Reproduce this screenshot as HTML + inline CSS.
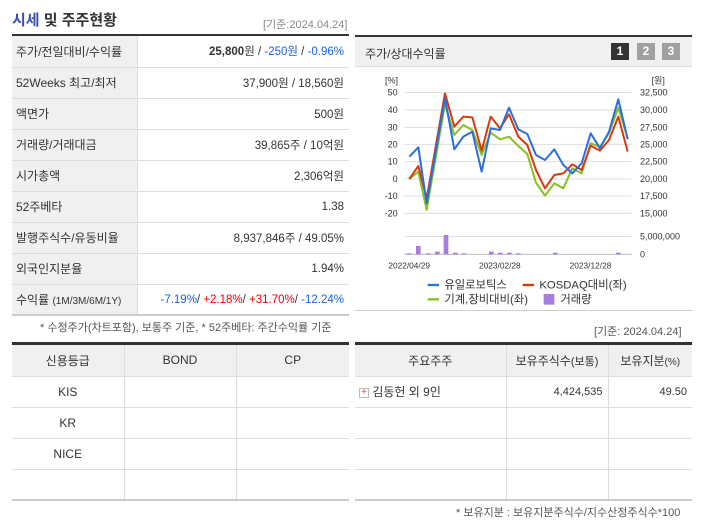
<!DOCTYPE html>
<html><head><meta charset="utf-8"><style>
*{margin:0;padding:0;box-sizing:border-box}
body{width:702px;height:525px;background:#fff;font-family:"Liberation Sans","Noto Sans CJK KR",sans-serif;font-size:12px;color:#333;position:relative;overflow:hidden}
.abs{position:absolute}
table{border-collapse:collapse;position:absolute}
td{border-bottom:1px solid #ddd;height:31px;font-size:12px}
.l td.h{background:#f0f0f0;border-right:1px solid #ddd;padding-left:4px;color:#333}
.l td.v{text-align:right;padding-right:5px;color:#333;font-size:11.5px}
.b td,.b th{border:1px solid #ddd;border-top:none;height:31px;text-align:center;font-weight:normal;font-size:12px}
.b th{background:#f0f0f0;height:31px}
.b tr td:first-child,.b tr th:first-child{border-left:none}
.b tr td:last-child,.b tr th:last-child{border-right:none}
.blue{color:#1a5fe0}.red{color:#e00}
</style></head><body>
<div class="abs" style="left:12px;top:9px;font-size:15px;font-weight:bold;color:#333"><span style="color:#3a4fb0">시세</span> 및 주주현황</div>
<div class="abs" style="left:263px;top:16px;font-size:11px;color:#888">[기준:2024.04.24]</div>
<div class="abs" style="left:12px;top:34px;width:337px;height:2px;background:#333"></div>
<table class="l" style="left:12px;top:36px;width:337px">
<tr><td class="h" style="width:125px">주가/전일대비/수익률</td><td class="v"><b>25,800</b>원 / <span class="blue">-250원</span> / <span class="blue">-0.96%</span></td></tr>
<tr><td class="h">52Weeks 최고/최저</td><td class="v">37,900원 / 18,560원</td></tr>
<tr><td class="h">액면가</td><td class="v">500원</td></tr>
<tr><td class="h">거래량/거래대금</td><td class="v">39,865주 / 10억원</td></tr>
<tr><td class="h">시가총액</td><td class="v">2,306억원</td></tr>
<tr><td class="h">52주베타</td><td class="v">1.38</td></tr>
<tr><td class="h">발행주식수/유동비율</td><td class="v">8,937,846주 / 49.05%</td></tr>
<tr><td class="h">외국인지분율</td><td class="v">1.94%</td></tr>
<tr><td class="h" style="border-bottom:none">수익률 <span style="font-size:10px">(1M/3M/6M/1Y)</span></td><td class="v" style="border-bottom:none"><span class="blue">-7.19%</span>/ <span class="red">+2.18%</span>/ <span class="red">+31.70%</span>/ <span class="blue">-12.24%</span></td></tr>
</table>
<div class="abs" style="left:12px;top:314px;width:337px;height:2px;background:#ccc"></div>
<div class="abs" style="left:40px;top:319px;font-size:11px;color:#555">* 수정주가(차트포함), 보통주 기준, * 52주베타: 주간수익률 기준</div>

<div class="abs" style="left:355px;top:35px;width:337px;height:2px;background:#333"></div>
<div class="abs" style="left:355px;top:37px;width:337px;height:30px;background:#f0f0f0;border-bottom:1px solid #ddd"></div>
<div class="abs" style="left:365px;top:45px;font-size:12px">주가/상대수익률</div>
<div class="abs" style="left:611px;top:43px;width:18px;height:17px;background:#333;color:#fff;font-weight:bold;text-align:center;line-height:17px">1</div>
<div class="abs" style="left:637px;top:43px;width:18px;height:17px;background:#a0a0a0;color:#fff;font-weight:bold;text-align:center;line-height:17px">2</div>
<div class="abs" style="left:662px;top:43px;width:18px;height:17px;background:#a0a0a0;color:#fff;font-weight:bold;text-align:center;line-height:17px">3</div>
<svg class="abs" style="left:0;top:0" width="702" height="525">
<g transform="translate(355,30) scale(0.33333)" font-family="Liberation Sans, Noto Sans CJK KR" font-size="27" fill="#333">
<g stroke="#ddd" stroke-width="3">
<line x1="148" y1="188" x2="830" y2="188"/><line x1="148" y1="240" x2="830" y2="240"/><line x1="148" y1="292" x2="830" y2="292"/><line x1="148" y1="343" x2="830" y2="343"/><line x1="148" y1="395" x2="830" y2="395"/><line x1="148" y1="447" x2="830" y2="447"/><line x1="148" y1="498" x2="830" y2="498"/><line x1="148" y1="550" x2="830" y2="550"/><line x1="148" y1="620" x2="830" y2="620"/><line x1="148" y1="673" x2="830" y2="673" stroke="#bbb"/>
</g>
<text x="90" y="160">[%]</text><text x="890" y="160">[원]</text>
<g text-anchor="end"><text x="128" y="197">50</text><text x="128" y="249">40</text><text x="128" y="301">30</text><text x="128" y="352">20</text><text x="128" y="404">10</text><text x="128" y="456">0</text><text x="128" y="507">-10</text><text x="128" y="559">-20</text></g>
<g><text x="855" y="197">32,500</text><text x="855" y="249">30,000</text><text x="855" y="301">27,500</text><text x="855" y="352">25,000</text><text x="855" y="404">22,500</text><text x="855" y="456">20,000</text><text x="855" y="507">17,500</text><text x="855" y="559">15,000</text><text x="855" y="629">5,000,000</text><text x="855" y="682">0</text></g>
<g fill="#a77ee0"><rect x="155" y="670" width="14" height="3"/><rect x="183" y="648" width="14" height="25"/><rect x="213" y="670" width="14" height="3"/><rect x="240" y="665" width="14" height="8"/><rect x="266" y="615" width="14" height="58"/><rect x="294" y="668" width="14" height="5"/><rect x="320" y="670" width="14" height="3"/><rect x="402" y="665" width="14" height="8"/><rect x="429" y="668" width="14" height="5"/><rect x="456" y="668" width="14" height="5"/><rect x="483" y="670" width="14" height="3"/><rect x="594" y="668" width="14" height="5"/><rect x="783" y="668" width="14" height="5"/></g>
<text x="100" y="716" font-size="25">2022/04/29</text><text x="372" y="716" font-size="25">2023/02/28</text><text x="644" y="716" font-size="25">2023/12/28</text>
<g fill="none" stroke-width="6" stroke-linejoin="round">
<polyline stroke="#88c020" points="163,447 190,425 215,540 270,222 298,315 325,285 352,300 380,375 407,308 435,328 462,320 490,348 517,372 543,458 570,497 598,460 625,475 652,415 680,430 707,340 735,350 762,310 790,233 818,325"/>
<polyline stroke="#d83a10" points="163,447 190,408 215,505 270,190 298,290 325,260 352,262 380,362 407,260 435,295 462,253 490,320 517,345 543,420 570,475 598,435 625,430 652,403 680,420 707,347 735,362 762,330 790,260 818,365"/>
<polyline stroke="#2a6ee0" points="163,380 190,352 215,520 270,205 298,358 325,320 352,305 380,425 407,295 435,300 462,233 490,298 517,312 543,375 570,390 598,358 625,405 652,430 680,400 707,310 735,355 762,305 790,208 818,328"/>
</g>
<g font-size="34">
<line x1="218" y1="765" x2="252" y2="765" stroke="#2a6ee0" stroke-width="7"/><text x="268" y="776">유일로보틱스</text>
<line x1="503" y1="765" x2="537" y2="765" stroke="#d83a10" stroke-width="7"/><text x="553" y="776">KOSDAQ대비(좌)</text>
<line x1="218" y1="808" x2="252" y2="808" stroke="#88c020" stroke-width="7"/><text x="268" y="819">기계,장비대비(좌)</text>
<rect x="566" y="792" width="32" height="32" fill="#a77ee0"/><text x="616" y="819">거래량</text>
</g>
</g></svg>
<div class="abs" style="left:355px;top:310px;width:337px;height:1px;background:#ccc"></div>
<div class="abs" style="left:594px;top:323px;font-size:11px;color:#555">[기준: 2024.04.24]</div>

<div class="abs" style="left:12px;top:342px;width:337px;height:3px;background:#333"></div>
<table class="b" style="left:12px;top:345px;width:337px">
<tr><th style="width:112px">신용등급</th><th style="width:112px">BOND</th><th>CP</th></tr>
<tr><td>KIS</td><td></td><td></td></tr>
<tr><td>KR</td><td></td><td></td></tr>
<tr><td>NICE</td><td></td><td></td></tr>
<tr><td></td><td></td><td></td></tr>
</table>
<div class="abs" style="left:12px;top:499px;width:337px;height:2px;background:#ccc"></div>
<div class="abs" style="left:355px;top:342px;width:337px;height:3px;background:#333"></div>
<table class="b" style="left:355px;top:345px;width:337px">
<tr><th style="width:151px">주요주주</th><th style="width:102px">보유주식수<span style="font-size:11px">(보통)</span></th><th>보유지분<span style="font-size:10px">(%)</span></th></tr>
<tr><td style="text-align:left;padding-left:4px"><span style="display:inline-block;width:10px;height:10px;border:1px solid #bbb;color:#e05010;font-size:10px;line-height:8px;text-align:center;vertical-align:middle">+</span> 김동헌 외 9인</td><td style="text-align:right;padding-right:5px;font-size:11px">4,424,535</td><td style="text-align:right;padding-right:5px;font-size:11px">49.50</td></tr>
<tr><td></td><td></td><td></td></tr>
<tr><td></td><td></td><td></td></tr>
<tr><td></td><td></td><td></td></tr>
</table>
<div class="abs" style="left:355px;top:499px;width:337px;height:2px;background:#ccc"></div>
<div class="abs" style="left:456px;top:504px;font-size:11px;color:#555">* 보유지분 : 보유지분주식수/지수산정주식수*100</div>
</body></html>
